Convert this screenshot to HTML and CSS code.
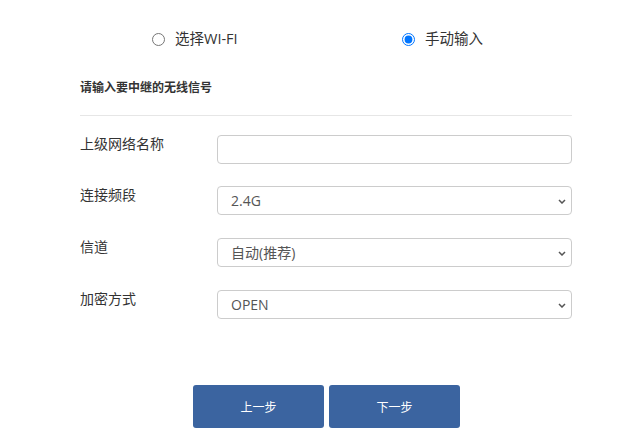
FILE: index.html
```html
<!doctype html>
<html>
  <head>
    <title>无线中继</title>
    <meta charset="utf-8" />
    <link rel="stylesheet" href="styles.css">
  </head>
  <body>
    <div class='page'>
      <div class='mode'>
        <label class='opt'><input type='radio' name='mode'> 选择WI-FI</label>
        <label class='opt'><input type='radio' name='mode' checked> 手动输入</label>
      </div>

      <div class='title'>请输入要中继的无线信号</div>

      <div class='row first'>
        <div class='label'>上级网络名称</div>
        <input class='field' type='text'>
      </div>
      <div class='row'>
        <div class='label'>连接频段</div>
        <div class='select-wrap'>
          <select class='field'>
            <option>2.4G</option>
            <option>5G</option>
          </select>
          <svg class='arrow' width='8' height='5' viewBox='0 0 8 5'><path d='M1 1 L4 4 L7 1' fill='none' stroke='#555' stroke-width='1.5'/></svg>
        </div>
      </div>
      <div class='row'>
        <div class='label'>信道</div>
        <div class='select-wrap'>
          <select class='field'>
            <option>自动(推荐)</option>
          </select>
          <svg class='arrow' width='8' height='5' viewBox='0 0 8 5'><path d='M1 1 L4 4 L7 1' fill='none' stroke='#555' stroke-width='1.5'/></svg>
        </div>
      </div>
      <div class='row'>
        <div class='label'>加密方式</div>
        <div class='select-wrap'>
          <select class='field'>
            <option>OPEN</option>
            <option>WPA2-PSK</option>
          </select>
          <svg class='arrow' width='8' height='5' viewBox='0 0 8 5'><path d='M1 1 L4 4 L7 1' fill='none' stroke='#555' stroke-width='1.5'/></svg>
        </div>
      </div>

      <div class='buttons'>
        <button class='btn'>上一步</button>
        <button class='btn'>下一步</button>
      </div>
    </div>
  </body>
</html>
```

FILE: styles.css
```css
body {
  margin: 0;
  background: #ffffff;
  font-family: "Open Sans", "Noto Sans CJK SC", sans-serif;
  color: #333333;
}

.page {
  width: 492px;
  margin-left: 80px;
  padding-top: 29px;
}

.mode {
  display: flex;
  padding-left: 72px;
}

.opt {
  flex-shrink: 0;
  display: flex;
  align-items: center;
  font-size: 14.5px;
  line-height: 20px;
  color: #333333;
}

.opt:first-child {
  width: 250px;
}

.opt input {
  margin: 0 10px 0 0;
  width: 13px;
  height: 13px;
}

.title {
  margin-top: 31px;
  font-size: 12px;
  font-weight: bold;
  line-height: 16px;
  padding-bottom: 19px;
  border-bottom: 1px solid #e6e6e6;
  margin-bottom: 19px;
}

.row {
  display: flex;
  align-items: flex-start;
  margin-bottom: 23px;
}

.row.first {
  margin-bottom: 22px;
}

.label {
  width: 137px;
  font-size: 14px;
  line-height: 18px;
  color: #333333;
}

.field {
  box-sizing: border-box;
  width: 355px;
  height: 29px;
  margin: 0;
  border: 1px solid #cccccc;
  border-radius: 4px;
  background: #ffffff;
  font-family: "Open Sans", "Noto Sans CJK SC", sans-serif;
  font-size: 14px;
  color: #555555;
  padding: 0 12px;
}

select.field {
  appearance: none;
  -webkit-appearance: none;
  padding: 0 24px 0 13px;
}

.select-wrap {
  position: relative;
  width: 355px;
  height: 29px;
}

.arrow {
  position: absolute;
  right: 6px;
  top: 13px;
}

.buttons {
  display: flex;
  gap: 5px;
  margin-top: 66px;
  margin-left: 113px;
}

.btn {
  width: 131px;
  height: 43px;
  border: none;
  border-radius: 3px;
  background: #3b64a0;
  color: #ffffff;
  font-family: "Noto Sans CJK SC", sans-serif;
  font-size: 12px;
}
```
